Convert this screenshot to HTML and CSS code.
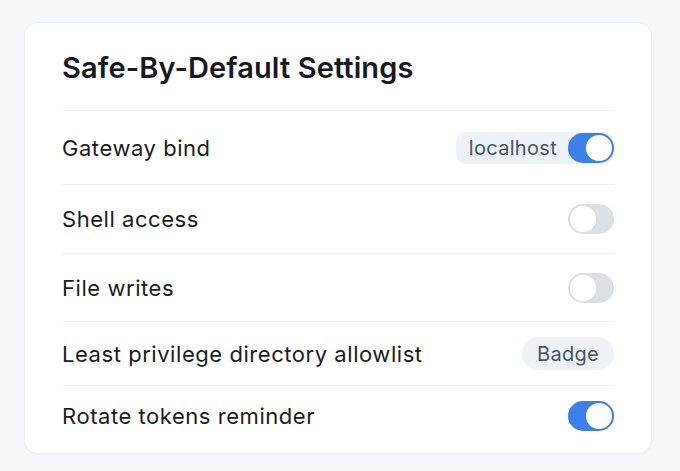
FILE: index.html
```html
<!DOCTYPE html>
<html lang="en">
<head>
<meta charset="utf-8">
<title>Safe-By-Default Settings</title>
<link rel="stylesheet" href="styles.css">
</head>
<body>
<section class="card">
  <h1 class="title">Safe-By-Default Settings</h1>
  <div class="list">
    <div class="row">
      <span class="label">Gateway bind</span>
      <div class="pill">
        <span class="pill-text">localhost</span>
        <span class="toggle on"><span class="knob"></span></span>
      </div>
    </div>
    <div class="row">
      <span class="label">Shell access</span>
      <span class="toggle"><span class="knob"></span></span>
    </div>
    <div class="row">
      <span class="label">File writes</span>
      <span class="toggle"><span class="knob"></span></span>
    </div>
    <div class="row">
      <span class="label">Least privilege directory allowlist</span>
      <span class="badge">Badge</span>
    </div>
    <div class="row">
      <span class="label">Rotate tokens reminder</span>
      <span class="toggle on"><span class="knob"></span></span>
    </div>
  </div>
</section>
</body>
</html>
```

FILE: styles.css
```css
* { box-sizing: border-box; }
html, body { margin: 0; }
body {
  background: #f6f7f8;
  font-family: Inter, "Noto Sans", "Liberation Sans", sans-serif;
  color: #1b1e24;
  padding: 22px 28px 17px 24px;
  height: 471px;
}
.card {
  width: 628px;
  height: 432px;
  background: #ffffff;
  border: 1px solid #eceef0;
  border-radius: 14px;
  padding: 27px 37px 8px 37px;
  box-shadow: 0 1px 2px rgba(0,0,0,0.03);
}
.title {
  margin: 0 0 24px;
  font-size: 29px;
  line-height: 36px;
  font-weight: 600;
  letter-spacing: 0.1px;
  color: #16191f;
}
.list {
  display: grid;
  grid-template-rows: 74px 69px 68px 64px 60px;
}
.row {
  display: flex;
  align-items: center;
  justify-content: space-between;
  border-top: 1px solid #eceef0;
}
.label {
  font-size: 22px;
  letter-spacing: 0.55px;
  color: #191c22;
}
.pill {
  display: flex;
  align-items: center;
  gap: 11px;
  height: 32px;
  padding-left: 13px;
  background: #eef2f6;
  border-radius: 10px;
}
.pill-text {
  font-size: 20px;
  letter-spacing: 0.3px;
  color: #475467;
}
.toggle {
  display: flex;
  align-items: center;
  width: 46px;
  height: 30px;
  padding: 2px;
  border-radius: 15px;
  background: #dcdfe4;
}
.toggle.on {
  background: #3b7fe8;
  justify-content: flex-end;
}
.knob {
  width: 26px;
  height: 26px;
  border-radius: 50%;
  background: #ffffff;
}
.badge {
  display: flex;
  align-items: center;
  height: 33px;
  padding: 0 15px;
  border-radius: 17px;
  background: #eef2f6;
  font-size: 20px;
  letter-spacing: 0.3px;
  color: #475467;
}
```
